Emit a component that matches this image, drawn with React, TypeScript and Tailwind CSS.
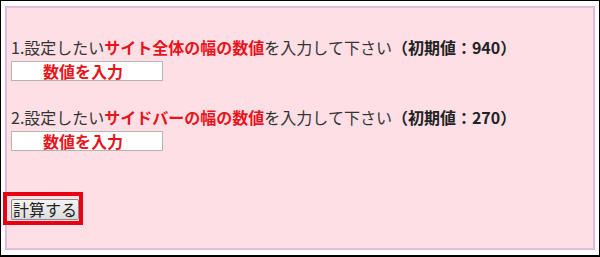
import React from 'react';

const FONT = '"Noto Sans CJK JP", "Noto Sans", sans-serif';

function Row({ n, label, init }: { n: number; label: string; init: number }) {
  return (
    <div className="flex flex-col items-start">
      <p className="text-[16px] leading-[24px] text-[#333] whitespace-nowrap">
        {n}.設定したい<span className="font-bold text-[#e8141c]">{label}</span>を入力して下さい
        <span className="font-bold text-[#222]">（初期値：{init}）</span>
      </p>
      <input
        type="text"
        placeholder="数値を入力"
        className="mt-[2px] w-[152px] h-[20px] bg-white border border-[#b4b4b4] pr-[8px] text-center text-[16px] font-bold leading-[18px] placeholder:text-[#e8141c] placeholder:font-bold outline-none"
        style={{ fontFamily: FONT }}
      />
    </div>
  );
}

export default function App() {
  return (
    <div
      className="w-[600px] h-[257px] bg-white border border-black border-b-2 pl-[4px] pt-[5px]"
      style={{ fontFamily: FONT }}
    >
      <div className="relative w-[590px] h-[244px] bg-[#ffdfe6] border-2 border-[#e2bcdc] pl-[4px] pt-[27px]">
        <div className="flex flex-col gap-[24px]">
          <Row n={1} label="サイト全体の幅の数値" init={940} />
          <Row n={2} label="サイドバーの幅の数値" init={270} />
        </div>
        <div className="relative mt-[46px] w-fit">
          <button className="h-[21px] px-[1px] text-[16px] leading-[19px] text-[#222] bg-gradient-to-b from-[#f4f4f4] to-[#dcdcdc] border border-[#8a8a8a] rounded-[2px]">
            計算する
          </button>
          <div className="absolute left-[-8px] top-[-5px] w-[80px] h-[33px] border-4 border-[#e60012] pointer-events-none" />
        </div>
      </div>
    </div>
  );
}
